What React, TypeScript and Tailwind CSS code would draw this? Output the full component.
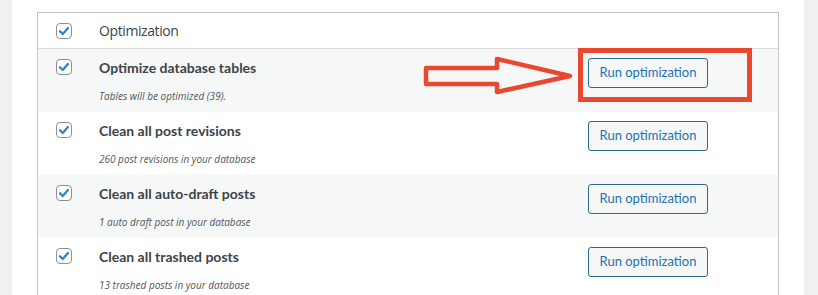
const rows = [
  { title: "Optimize database tables", note: "Tables will be optimized (39).", shaded: true },
  { title: "Clean all post revisions", note: "260 post revisions in your database", shaded: false },
  { title: "Clean all auto-draft posts", note: "1 auto draft post in your database", shaded: true },
  { title: "Clean all trashed posts", note: "13 trashed posts in your database", shaded: false },
];

const Checkbox = () => (
  <div className="w-4 h-4 rounded-[4px] border border-[#8c8f94] bg-white flex items-center justify-center">
    <svg width="14" height="14" viewBox="0 0 14 14">
      <path d="M3 7.3 L5.8 10 L11 4" fill="none" stroke="#3582c4" strokeWidth="2.3" strokeLinecap="round" strokeLinejoin="round" />
    </svg>
  </div>
);

export default function App() {
  return (
    <div
      className="w-[818px] h-[295px] bg-[#f0f0f1] overflow-hidden relative"
      style={{ fontFamily: "Lato, 'Open Sans', sans-serif" }}
    >
      <div className="ml-[12px] w-[792px] h-full bg-white pt-[12px] pl-[25px]">
        <div className="w-[742px] border border-b-0 border-[#c3c4c7]">
          {/* header */}
          <div className="flex h-[36px] items-center border-b border-[#dcdcde]">
            <div className="w-[61px] pl-[18px]">
              <Checkbox />
            </div>
            <div className="text-[14px] tracking-[-0.4px] text-[#3c434a] font-['Open_Sans',sans-serif]">
              Optimization
            </div>
          </div>
          {rows.map((r) => (
            <div key={r.title} className={`flex h-[63px] ${r.shaded ? "bg-[#f6f7f7]" : "bg-white"}`}>
              <div className="w-[61px] pl-[18px] pt-[10px]">
                <Checkbox />
              </div>
              <div className="flex-1 pt-[10px]">
                <div className="text-[14px] font-bold text-[#3c434a] leading-[18px]">{r.title}</div>
                <div className="mt-[13px] text-[10px] italic text-[#50575e] leading-[13px] font-['Open_Sans',sans-serif]">
                  {r.note}
                </div>
              </div>
              <div className="w-[190px] pt-[9px]">
                <button className="w-[120px] h-[30px] rounded-[3px] border border-[#2b6a94] bg-[#f6f7f7] text-[13px] text-[#2271b1]">
                  Run optimization
                </button>
              </div>
            </div>
          ))}
        </div>
      </div>

      {/* annotation: arrow + highlight box */}
      <svg className="absolute left-[420px] top-[54px]" width="156" height="44" viewBox="420 54 156 44">
        <path
          d="M426 68 L497 68 L497 59 L570 76 L497 92 L497 84 L426 84 Z"
          fill="none"
          stroke="#e9472f"
          strokeWidth="4.5"
          strokeLinejoin="round"
        />
      </svg>
      <div className="absolute left-[578px] top-[48px] w-[174px] h-[54px] border-[5px] border-[#e9472f]" />
    </div>
  );
}
